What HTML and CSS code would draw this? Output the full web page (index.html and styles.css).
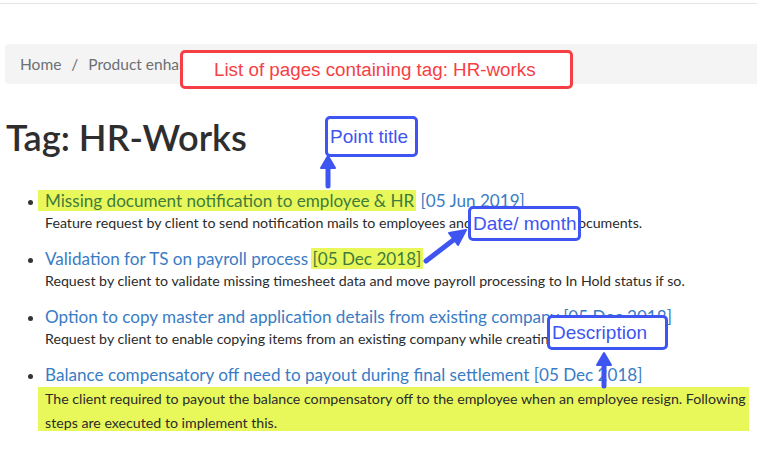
FILE: index.html
```html
<!DOCTYPE html>
<html>
<head>
<meta charset="utf-8">
<link rel="stylesheet" href="styles.css">
</head>
<body>
<div class="topline"></div>
<main class="page">
  <nav class="breadcrumb">
    <span class="crumb">Home</span>
    <span class="sep">/</span>
    <span class="crumb">Product enhancements</span>
  </nav>
  <h1 class="title">Tag: HR-Works</h1>
  <ul class="items">
    <li class="item">
      <div class="item-title"><a class="link hl hl-first">Missing document notification to employee &amp; HR</a> <a class="link">[05 Jun 2019]</a></div>
      <div class="desc">Feature request by client to send notification mails to employees and HR for missing documents.</div>
    </li>
    <li class="item">
      <div class="item-title"><a class="link">Validation for TS on payroll process</a> <a class="link hl">[05 Dec 2018]</a></div>
      <div class="desc">Request by client to validate missing timesheet data and move payroll processing to In Hold status if so.</div>
    </li>
    <li class="item">
      <div class="item-title"><a class="link">Option to copy master and application details from existing company</a> <a class="link">[05 Dec 2018]</a></div>
      <div class="desc">Request by client to enable copying items from an existing company while creating a new one.</div>
    </li>
    <li class="item">
      <div class="item-title"><a class="link">Balance compensatory off need to payout during final settlement</a> <a class="link">[05 Dec 2018]</a></div>
      <div class="desc desc-hl">The client required to payout the balance compensatory off to the employee when an employee resign. Following steps are executed to implement this.</div>
    </li>
  </ul>
</main>

<div class="note note-red">List of pages containing tag: HR-works</div>
<div class="note note-blue note-point">Point title</div>
<div class="note note-blue note-date">Date/ month</div>
<div class="note note-blue note-desc">Description</div>

<svg class="arrows" width="757" height="466" viewBox="0 0 757 466">
  <g stroke="#3f55f2" stroke-width="5" stroke-linecap="round" fill="#3f55f2">
    <line x1="328" y1="186" x2="328" y2="166"/>
    <polygon points="321,168 335,168 328,156" stroke-width="2" stroke-linejoin="round"/>
    <line x1="426" y1="261" x2="456" y2="238"/>
    <polygon points="449,233 458,245 466,230" stroke-width="2" stroke-linejoin="round"/>
    <line x1="604" y1="386" x2="604" y2="364"/>
    <polygon points="597,365 611,365 604,353" stroke-width="2" stroke-linejoin="round"/>
  </g>
</svg>
</body>
</html>
```

FILE: styles.css
```css
html, body {
  margin: 0;
  padding: 0;
  background: #fff;
}
body {
  font-family: "Lato", "Open Sans", sans-serif;
  color: #333;
  width: 757px;
  height: 466px;
  overflow: hidden;
  position: relative;
}
.topline {
  height: 3px;
  border-bottom: 1px solid #e4e4e4;
}
.page {
  padding-left: 5px;
}
.breadcrumb {
  margin-top: 40px;
  height: 40px;
  background: #f4f4f4;
  border-radius: 4px 0 0 4px;
  display: flex;
  align-items: center;
  padding-left: 15px;
  font-size: 15.5px;
  color: #6c6f73;
  white-space: nowrap;
  overflow: hidden;
}
.sep {
  margin: 0 10px;
}
.title {
  margin: 31px 0 0 1px;
  font-size: 36.2px;
  font-weight: 600;
  line-height: 44px;
  color: #2e2e2e;
}
.items {
  margin: 30px 0 0 0;
  padding-left: 40px;
  list-style: disc;
}
.item {
  margin-bottom: 12px;
}
.item-title {
  font-size: 17.1px;
  line-height: 23px;
  white-space: nowrap;
}
.link {
  color: #3a7cc4;
  text-decoration: none;
}
.hl {
  background: #e8f85a;
  color: #3f7b3d;
  padding: 0 2px;
  margin-left: -2px;
}
.hl-first {
  padding-left: 7px;
  margin-left: -7px;
}
.desc {
  font-size: 14.2px;
  line-height: 24px;
  color: #2b2b2b;
  margin-top: -1px;
}
.desc-hl {
  background: #e8f85a;
  margin-top: 1px;
  margin-left: -7px;
  padding-left: 7px;
  margin-right: 8px;
  height: 44px;
  overflow: visible;
}
.note {
  position: absolute;
  background: #fff;
  font-family: "Liberation Sans", Arial, sans-serif;
  box-sizing: border-box;
  display: flex;
  align-items: center;
  border-radius: 5px;
}
.note-red {
  left: 180px;
  top: 50px;
  width: 393px;
  height: 39px;
  border: 3px solid #f53f44;
  color: #f53f44;
  font-size: 18.8px;
  padding-left: 31px;
}
.note-blue {
  border: 3.5px solid #3f55f2;
  color: #3f55f2;
  font-size: 19px;
  padding-left: 2px;
}
.note-point {
  left: 325px;
  top: 116px;
  width: 93px;
  height: 41px;
}
.note-date {
  left: 468px;
  top: 206px;
  width: 113px;
  height: 35px;
}
.note-desc {
  left: 547px;
  top: 315px;
  width: 121px;
  height: 35px;
}
.arrows {
  position: absolute;
  left: 0;
  top: 0;
  pointer-events: none;
}
```
